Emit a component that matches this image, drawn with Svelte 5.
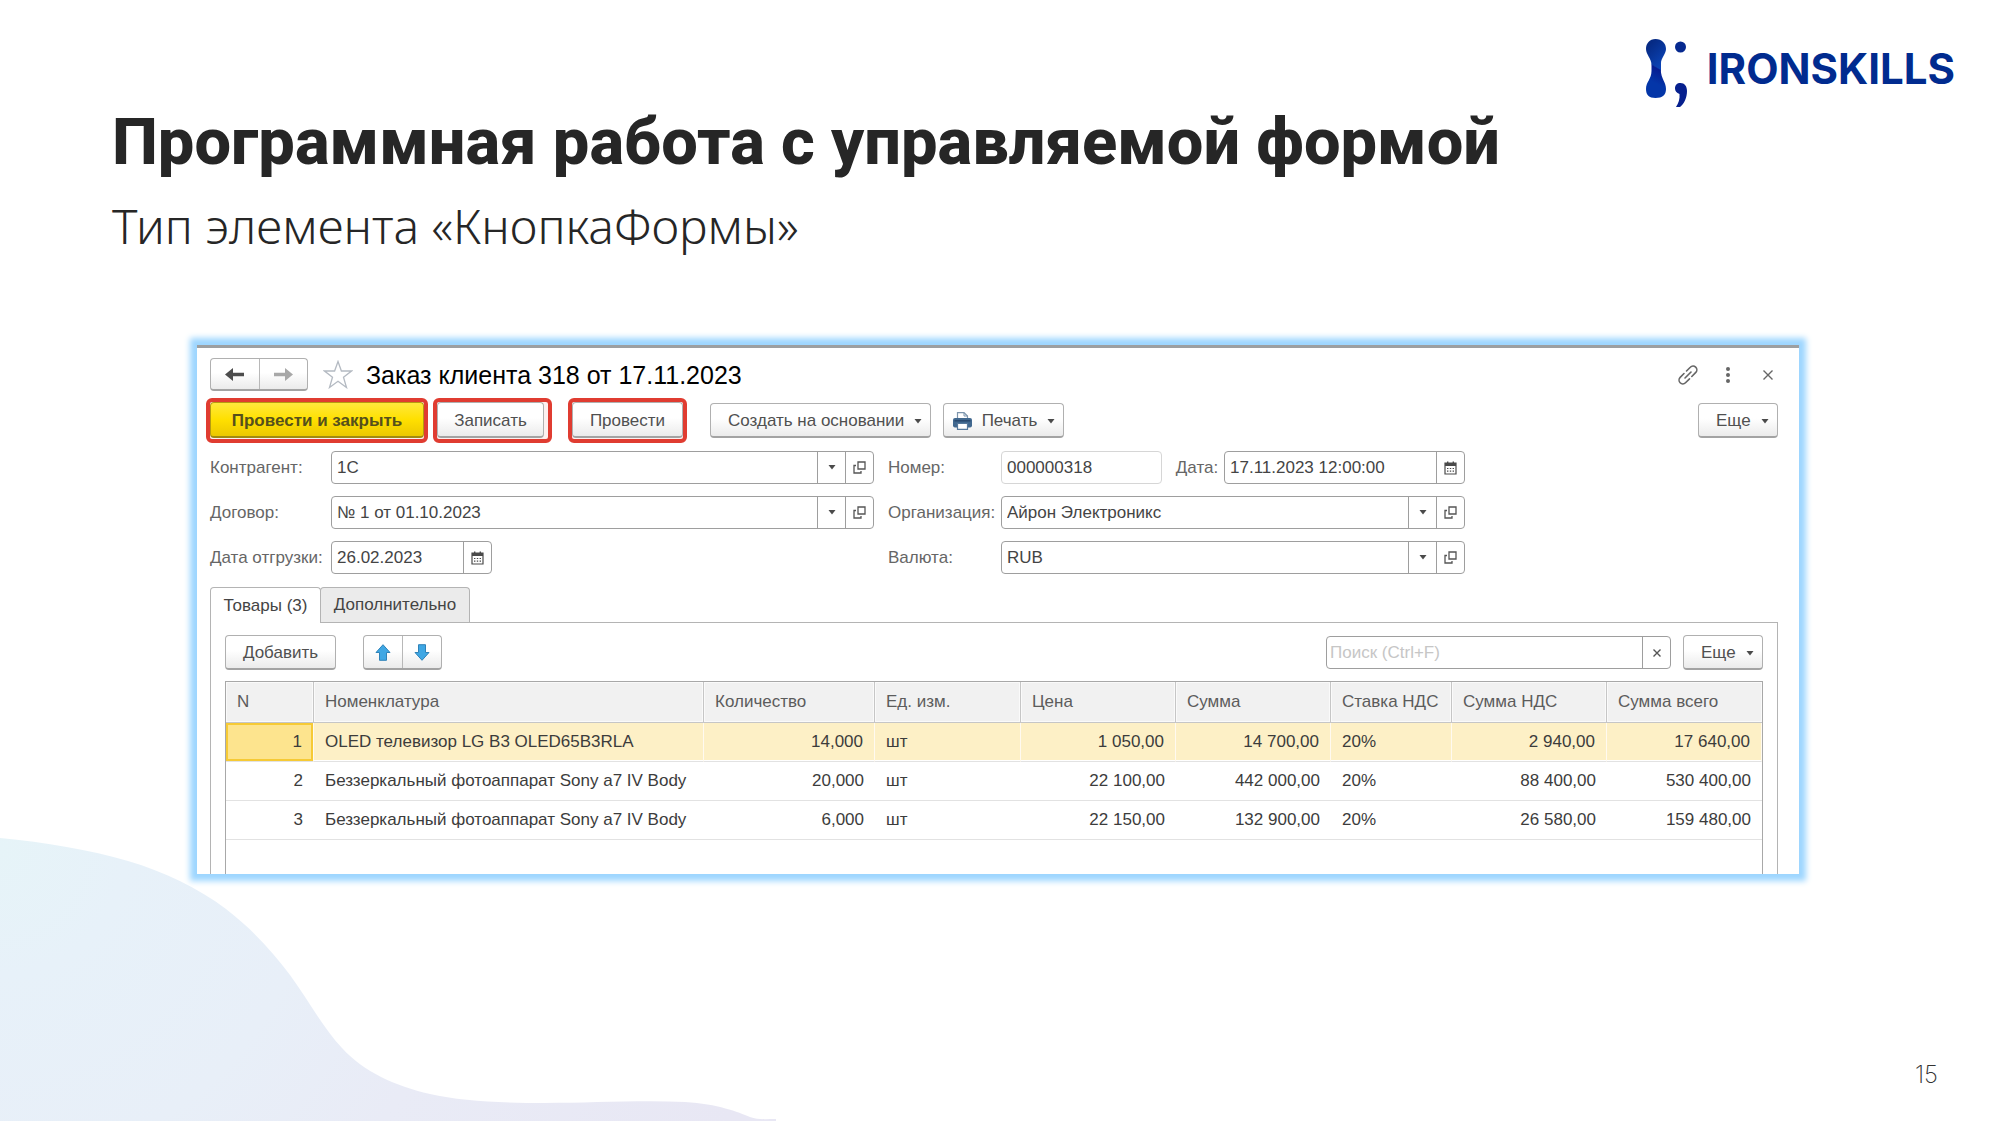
<script>
  const columns = [
    { title: 'N', key: 'n', cls: 'c-n', num: true },
    { title: 'Номенклатура', key: 'name', cls: 'c-name' },
    { title: 'Количество', key: 'qty', cls: 'c-qty', num: true },
    { title: 'Ед. изм.', key: 'unit', cls: 'c-unit' },
    { title: 'Цена', key: 'price', cls: 'c-price', num: true },
    { title: 'Сумма', key: 'sum', cls: 'c-sum', num: true },
    { title: 'Ставка НДС', key: 'rate', cls: 'c-rate' },
    { title: 'Сумма НДС', key: 'vat', cls: 'c-vat', num: true },
    { title: 'Сумма всего', key: 'total', cls: 'c-total', num: true }
  ];
  const rows = [
    { n: '1', name: 'OLED телевизор LG B3 OLED65B3RLA', qty: '14,000', unit: 'шт', price: '1 050,00', sum: '14 700,00', rate: '20%', vat: '2 940,00', total: '17 640,00' },
    { n: '2', name: 'Беззеркальный фотоаппарат Sony a7 IV Body', qty: '20,000', unit: 'шт', price: '22 100,00', sum: '442 000,00', rate: '20%', vat: '88 400,00', total: '530 400,00' },
    { n: '3', name: 'Беззеркальный фотоаппарат Sony a7 IV Body', qty: '6,000', unit: 'шт', price: '22 150,00', sum: '132 900,00', rate: '20%', vat: '26 580,00', total: '159 480,00' }
  ];
  let selected = $state(0);
</script>

{#snippet caret()}
  <svg class="caret" viewBox="0 0 8 5" width="8" height="5" aria-hidden="true"><path d="M0.500 0h7L4 4.500z" fill="#4a4a4a" /></svg>
{/snippet}

{#snippet openIcon()}
  <svg viewBox="0 0 13 13" width="13" height="13" fill="none" stroke="#555" stroke-width="1.3" aria-hidden="true">
    <path d="M5 1h7v7H5z" /><path d="M3 4.5H1V12h7v-2" />
  </svg>
{/snippet}

{#snippet calendar()}
  <svg viewBox="0 0 13 14" width="13" height="14" aria-hidden="true">
    <path d="M1 2h11v11H1z" fill="none" stroke="#4a4a4a" stroke-width="1.2" />
    <path d="M1 2h11v3H1zM3 0.500h1.4v3H3zM8.600 0.500H10v3H8.600z" fill="#4a4a4a" />
    <path d="M3 7.500h7M3 10.200h7" stroke="#4a4a4a" stroke-width="1.200" stroke-dasharray="1.400 1.400" />
  </svg>
{/snippet}

{#snippet refField(id, value)}
  <div class="field">
    <input {id} type="text" {value} />
    <button type="button" aria-label="Выбрать">{@render caret()}</button>
    <button type="button" aria-label="Открыть">{@render openIcon()}</button>
  </div>
{/snippet}

<main class="slide">
  <svg class="wave" viewBox="0 838 776 283" aria-hidden="true">
    <defs>
      <radialGradient id="wave-fill" gradientUnits="userSpaceOnUse" cx="0" cy="850" r="780">
        <stop offset="0" stop-color="#e6f4f8" />
        <stop offset="0.160" stop-color="#e7f1f9" />
        <stop offset="0.400" stop-color="#e8eff8" />
        <stop offset="0.600" stop-color="#e9ebf6" />
        <stop offset="1" stop-color="#e8e7f4" />
      </radialGradient>
    </defs>
    <path fill="url(#wave-fill)" d="M0 838C45 842 90 850 128 861C165 872 198 888 226 909C252 929 272 951 290 975C309 1001 323 1028 342 1048C364 1072 395 1086 430 1094C460 1101 500 1103 545 1103C590 1103 640 1100 685 1102C718 1104 738 1112 750 1117C758 1120 766 1119 776 1119V1121H0Z" />
  </svg>

  <header class="brand">
    <svg viewBox="0 0 44 70" width="44" height="70" aria-hidden="true">
      <defs>
        <linearGradient id="bone-top" x1="0" y1="0" x2="0.600" y2="1">
          <stop offset="0.200" stop-color="#062a84" /><stop offset="1" stop-color="#0b45b8" />
        </linearGradient>
        <linearGradient id="bone-bottom" x1="0.600" y1="0" x2="0.300" y2="1">
          <stop offset="0" stop-color="#07158a" /><stop offset="0.550" stop-color="#0436a8" />
        </linearGradient>
      </defs>
      <path fill="url(#bone-top)" d="M10.500 1C17 1 21 5.500 21 11C21 16 16 20 16 25V33L6.500 27C6.500 20 1 17 1 11C1 5.500 4.500 1 10.500 1Z" />
      <path fill="url(#bone-bottom)" d="M6.500 26.500L15.800 32C16 41 21 44 21 51C21 57 17.500 60 10.500 60C4 60 1 57 1 51C1 44 6.500 41 6.500 33Z" />
      <circle cx="35.500" cy="9" r="5.500" fill="#06298f" />
      <path fill="#06208e" d="M35.500 45C39.500 45 42 48 42 53C42 60 39 66 35 69H31C33.500 65 35 61 34.500 56C31.500 55 30 53 30 50.500C30 47 32 45 35.500 45Z" />
    </svg>
    <span class="brand-name">IRONSKILLS</span>
  </header>

  <h1>Программная работа с управляемой формой</h1>
  <h2>Тип элемента «КнопкаФормы»</h2>

  <section class="window">
    <div class="titlebar">
      <div class="pair nav">
        <button type="button" aria-label="Назад">
          <svg viewBox="0 0 19 13" width="19" height="13"><path d="M0 6.500L8 0V4.700H19V8.300H8V13Z" fill="#4c4c4c" /></svg>
        </button>
        <button type="button" aria-label="Вперед">
          <svg viewBox="0 0 19 13" width="19" height="13"><path d="M19 6.500L11 0V4.700H0V8.300H11V13Z" fill="#a8a8a8" /></svg>
        </button>
      </div>
      <button type="button" class="plain star" aria-label="В избранное">
        <svg viewBox="0 0 30 29" width="30" height="29" fill="#fff" stroke="#b4bac2" stroke-width="1.300"><path d="M15 1.500L18.400 11H28.500L20.500 17.200L23.500 27.500L15 21.300L6.500 27.500L9.500 17.200L1.500 11H11.600Z" /></svg>
      </button>
      <h3>Заказ клиента 318 от 17.11.2023</h3>
      <div class="tools">
        <button type="button" class="plain" aria-label="Ссылка">
          <svg viewBox="0 0 20 20" width="20" height="20" fill="none" stroke="#666" stroke-width="1.600" stroke-linecap="round">
            <path d="M8.500 6L12.300 2.200A3.600 3.600 0 0 1 17.800 7.400L13.800 11.500" /><path d="M6 8.500L2.200 12.400A3.600 3.600 0 0 0 7.500 17.800L11.500 13.900" /><path d="M7 13L13 7" />
          </svg>
        </button>
        <button type="button" class="plain" aria-label="Меню">
          <svg viewBox="0 0 4 16" width="4" height="16" fill="#666"><circle cx="2" cy="2" r="2" /><circle cx="2" cy="8" r="2" /><circle cx="2" cy="14" r="2" /></svg>
        </button>
        <button type="button" class="plain" aria-label="Закрыть">
          <svg viewBox="0 0 10 10" width="10" height="10" stroke="#666" stroke-width="1.400"><path d="M0.500 0.500L9.500 9.500M9.500 0.500L0.500 9.500" /></svg>
        </button>
      </div>
    </div>

    <div class="toolbar">
      <span class="mark wide"><button type="button" class="btn primary">Провести и закрыть</button></span>
      <span class="mark loose"><button type="button" class="btn">Записать</button></span>
      <span class="mark apart"><button type="button" class="btn">Провести</button></span>
      <button type="button" class="btn drop create">Создать на основании {@render caret()}</button>
      <button type="button" class="btn drop print">
        <svg viewBox="0 0 19 18" width="19" height="18" aria-hidden="true">
          <path d="M4.500 8V0.700H11L14.500 4V8" fill="#fff" stroke="#7d95ad" stroke-width="1.200" />
          <path d="M11 0.700V4H14.500" fill="none" stroke="#7d95ad" stroke-width="1" />
          <rect x="0" y="6" width="19" height="9.500" rx="2" fill="#41688f" />
          <path d="M1.500 8.800H17.500" stroke="#27476b" stroke-width="1.400" />
          <path d="M4.500 11.500H14.500V17.400H4.500Z" fill="#fff" stroke="#56789b" stroke-width="1.200" />
        </svg>
        Печать {@render caret()}
      </button>
      <button type="button" class="btn drop more">Еще {@render caret()}</button>
    </div>

    <form class="fields" onsubmit={(e) => e.preventDefault()}>
      <label for="partner">Контрагент:</label>
      {@render refField('partner', '1С')}
      <label class="second" for="number">Номер:</label>
      <div class="split">
        <div class="field locked"><input id="number" type="text" value="000000318" readonly /></div>
        <label for="date">Дата:</label>
        <div class="field date">
          <input id="date" type="text" value="17.11.2023 12:00:00" />
          <button type="button" aria-label="Календарь">{@render calendar()}</button>
        </div>
      </div>

      <label class="first" for="contract">Договор:</label>
      {@render refField('contract', '№ 1 от 01.10.2023')}
      <label class="second" for="org">Организация:</label>
      {@render refField('org', 'Айрон Электроникс')}

      <label class="first" for="ship">Дата отгрузки:</label>
      <div class="field short">
        <input id="ship" type="text" value="26.02.2023" />
        <button type="button" aria-label="Календарь">{@render calendar()}</button>
      </div>
      <label class="second" for="currency">Валюта:</label>
      {@render refField('currency', 'RUB')}
    </form>

    <div class="tabs" role="tablist">
      <button type="button" role="tab" aria-selected="true" class="tab active">Товары (3)</button>
      <button type="button" role="tab" aria-selected="false" class="tab">Дополнительно</button>
    </div>

    <div class="panel">
      <div class="commands">
        <button type="button" class="btn add">Добавить</button>
        <div class="pair move">
          <button type="button" aria-label="Вверх">
            <svg viewBox="0 0 16 17" width="16" height="17"><path d="M8 0.700L15 8.500H11.500V16.300H4.500V8.500H1Z" fill="#3fa7e4" stroke="#2e82b8" stroke-width="1" /></svg>
          </button>
          <button type="button" aria-label="Вниз">
            <svg viewBox="0 0 16 17" width="16" height="17"><path d="M8 16.300L15 8.500H11.500V0.700H4.500V8.500H1Z" fill="#3fa7e4" stroke="#2e82b8" stroke-width="1" /></svg>
          </button>
        </div>
        <div class="field search">
          <input type="text" placeholder="Поиск (Ctrl+F)" aria-label="Поиск" />
          <button type="button" aria-label="Очистить">
            <svg viewBox="0 0 8 8" width="8" height="8" stroke="#555" stroke-width="1.400"><path d="M0.500 0.500L7.500 7.500M7.500 0.500L0.500 7.500" /></svg>
          </button>
        </div>
        <button type="button" class="btn drop more-small">Еще {@render caret()}</button>
      </div>

      <div class="grid">
        <table>
          <thead>
            <tr>
              {#each columns as col}<th class={col.cls} scope="col">{col.title}</th>{/each}
            </tr>
          </thead>
          <tbody>
            {#each rows as row, i}
              <tr class:selected={i === selected} onclick={() => (selected = i)}>
                {#each columns as col}<td class:num={col.num}>{row[col.key]}</td>{/each}
              </tr>
            {/each}
          </tbody>
        </table>
      </div>
    </div>
  </section>

  <footer>15</footer>
</main>

<style>
  :global(body) { margin: 0; background: #fff; }
  * { box-sizing: border-box; }
  svg { display: block; flex: none; }

  .slide {
    position: relative;
    display: flex;
    flex-direction: column;
    min-height: 100vh;
    color: #262626;
    background: #fff;
  }
  .wave { position: absolute; left: 0; bottom: 4px; width: 776px; height: 283px; }

  .brand {
    display: flex;
    justify-content: flex-end;
    gap: 18px;
    padding: 38px 45px 0 0;
  }
  .brand-name {
    font: 700 42px/62px Inter, sans-serif;
    color: #012b8f;
  }
  h1, h2 { margin: 0; padding: 0 112px; }
  h1 { margin-top: -2px; font: 800 65px/72px Roboto, sans-serif; }
  h2 { margin-top: 16px; font: 300 48px/64px 'Noto Sans', sans-serif; }

  .window {
    position: relative;
    margin: 87px 201px 0 197px;
    padding: 10px 21px 0 13px;
    border-top: 3px solid #9c9fa1;
    background: #fff;
    box-shadow: 0 0 6px 7px #9dd6ff;
    font: 17px/20px 'Liberation Sans', Arial, sans-serif;
    color: #444;
  }
  button, input { font: inherit; color: inherit; margin: 0; }
  button { padding: 0; }

  .titlebar { display: flex; align-items: center; height: 33px; }
  h3 { margin: 0 0 0 13px; font-size: 25px; font-weight: 400; line-height: 32px; color: #000; }
  .plain {
    display: flex;
    align-items: center;
    justify-content: center;
    width: 20px;
    height: 30px;
    border: 0;
    background: none;
  }
  .star { width: 30px; margin-left: 15px; }
  .tools { display: flex; gap: 20px; margin-left: auto; }

  .pair, .btn {
    border: 1px solid #b0b0b0;
    border-bottom: 2px solid #a3a3a3;
    border-radius: 4px;
    background: linear-gradient(#fff 45%, #ebebeb);
  }
  .pair { display: flex; }
  .pair button {
    display: flex;
    flex: 1;
    align-items: center;
    justify-content: center;
    border: 0;
    background: none;
  }
  .pair button + button { border-left: 1px solid #b8b8b8; }
  .nav { width: 98px; height: 33px; }
  .move { width: 79px; height: 35px; margin-left: 27px; }

  .toolbar { display: flex; align-items: center; height: 45px; margin: 7px 0 0 -4px; }
  .btn { height: 35px; padding-top: 2px; color: #505050; white-space: nowrap; }
  .mark {
    display: flex;
    width: 119px;
    height: 45px;
    margin-left: 5px;
    border: 4px solid #e03c31;
    border-radius: 6px;
    background: #fdf1f0;
  }
  .mark .btn { flex: 1; height: 36px; }
  .loose { padding-right: 4px; }
  .wide { width: 222px; margin-left: 0; }
  .apart { margin-left: 16px; }
  .primary {
    border-color: #b59b10;
    border-bottom-color: #a18a10;
    background: linear-gradient(#ffe83c, #ffe000 50%, #ecc800);
    font-weight: 700;
    color: #55501c;
  }
  .drop { display: flex; align-items: center; justify-content: space-between; padding: 2px 8px 0 17px; }
  .create { width: 221px; margin-left: 23px; }
  .print { width: 121px; margin-left: 12px; padding: 2px 8px 0 9px; }
  .more { width: 80px; margin-left: auto; }
  .more-small { width: 80px; margin-left: 12px; }

  .fields {
    display: grid;
    grid-template-columns: 121px 543fr 127px 464fr 313fr;
    row-gap: 12px;
    margin-top: 8px;
  }
  label { line-height: 33px; color: #666; white-space: nowrap; }
  .first { grid-column: 1; }
  .second { grid-column: 3; padding-left: 14px; }
  .field {
    display: flex;
    height: 33px;
    border: 1px solid #9e9e9e;
    border-radius: 4px;
    background: #fff;
    overflow: hidden;
  }
  .field input {
    flex: 1;
    min-width: 0;
    padding: 0 0 0 5px;
    border: 0;
    outline: 0;
    background: none;
  }
  .field button {
    display: flex;
    align-items: center;
    justify-content: center;
    width: 28px;
    border: 0;
    border-left: 1px solid #9e9e9e;
    background: none;
  }
  .split { display: flex; justify-content: space-between; }
  .split .locked { width: 161px; border-color: #d6d6d6; }
  .split .date { width: 241px; }
  .split label { margin-right: -8px; }
  .short { width: 161px; }

  .tabs { display: flex; height: 36px; margin-top: 13px; }
  .tab {
    height: 35px;
    padding: 0;
    border: 1px solid #b4b4b4;
    border-bottom: 0;
    border-radius: 4px 4px 0 0;
    background: #ebebeb;
    color: #444;
    white-space: nowrap;
  }
  .tab + .tab { width: 150px; margin-left: -1px; }
  .active { position: relative; width: 111px; height: 36px; background: #fff; }

  .panel {
    margin-top: -1px;
    padding: 12px 14px 0;
    border: 1px solid #b4b4b4;
    border-bottom: 0;
  }
  .commands { display: flex; align-items: center; height: 35px; }
  .add { width: 111px; }
  .search { width: 345px; margin-left: auto; }
  .field.search input { padding-left: 3px; }
  .search input::placeholder { color: #c6c6c6; opacity: 1; }

  .grid {
    margin-top: 11px;
    padding-bottom: 34px;
    border: 1px solid #a8a8a8;
    border-bottom: 0;
  }
  table { width: 100%; table-layout: fixed; border-collapse: separate; border-spacing: 0; }
  th, td { padding: 0 11px; white-space: nowrap; text-align: left; }
  th {
    height: 41px;
    border-right: 1px solid #c6c6c6;
    border-bottom: 1px solid #c6c6c6;
    background: #f1f1f1;
    box-shadow: inset 0 0 0 1px #fafafa;
    font-weight: 400;
    color: #5c5c5c;
  }
  th:last-child { border-right: 0; }
  td { height: 39px; border-bottom: 1px solid #e2e2e2; color: #3c3c3c; }
  .num { text-align: right; }
  .selected td {
    border-right: 1px solid #fffaf0;
    background: #fdf0c6;
    box-shadow: inset 0 -1px #fff;
  }
  .selected td:first-child { background: #fde48e; box-shadow: inset 0 0 0 2px #f6ca35; }
  .c-n { width: 88px; }
  .c-name { width: auto; }
  .c-qty { width: 171px; }
  .c-unit { width: 146px; }
  .c-price, .c-sum { width: 155px; }
  .c-rate { width: 121px; }
  .c-vat, .c-total { width: 155px; }

  footer {
    margin-top: auto;
    padding: 0 62px 38px 0;
    font: 200 24px/24px Inter, sans-serif;
    text-align: right;
    color: #333;
  }
</style>
